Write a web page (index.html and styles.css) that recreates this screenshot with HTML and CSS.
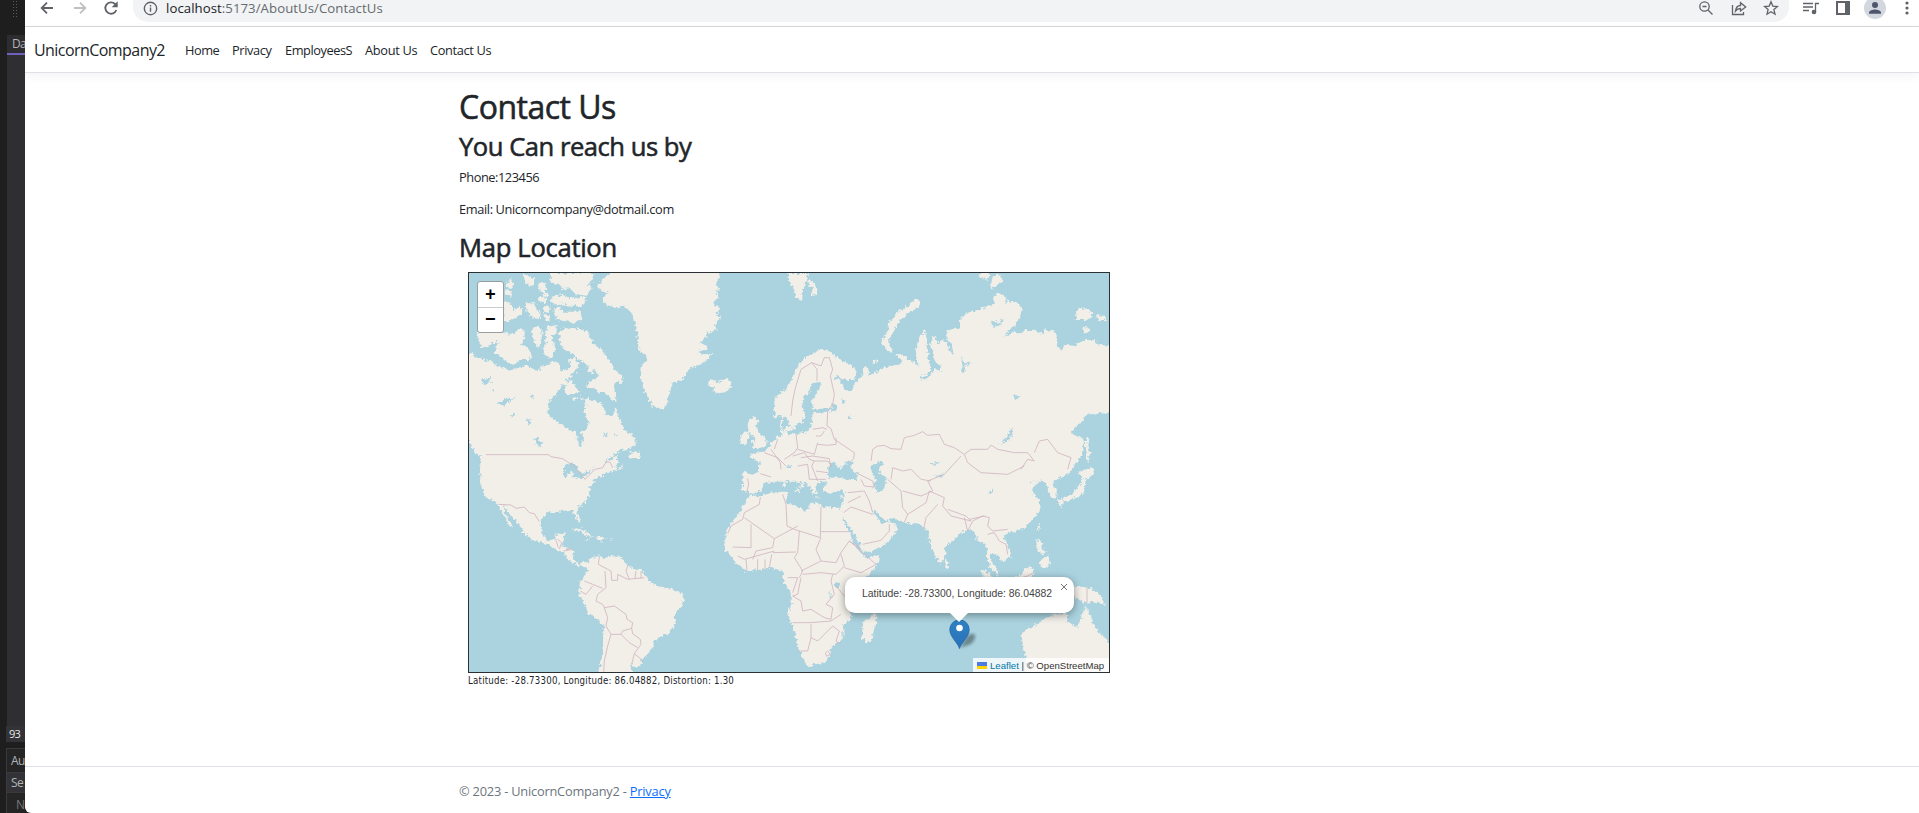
FILE: index.html
```html
<!DOCTYPE html>
<html lang="en">
<head>
<meta charset="utf-8">
<title>Contact Us - UnicornCompany2</title>
<link rel="stylesheet" href="styles.css">
</head>
<body>
<div class="desktop">
  <aside class="ide">
    <div class="ide-top"><span class="grip"></span></div>
    <div class="ide-tab">Da</div>
    <div class="ide-editor"></div>
    <div class="ide-zoom">93 </div>
    <div class="ide-gap"></div>
    <div class="ide-row">Au</div>
    <div class="ide-row ide-search">Se</div>
    <div class="ide-row ide-name">N</div>
  </aside>
  <div class="browser">
    <div class="toolbar">
      <svg class="ic back" viewBox="0 0 24 24"><path d="M21 12H4M12 4l-8 8 8 8"/></svg>
      <svg class="ic fwd" viewBox="0 0 24 24"><path d="M3 12h17M12 4l8 8-8 8"/></svg>
      <svg class="ic reload" viewBox="0 0 24 24"><path d="M20 15a8.500 8.500 0 1 1-2-9l2.500 2.500"/><path class="solid" d="M22 2v9h-9z"/></svg>
      <div class="address">
        <svg class="info" viewBox="0 0 16 16"><circle cx="8" cy="8" r="6.600"/><path d="M8 7v4.500M8 4.300v1.600"/></svg>
        <span class="url"><b>localhost</b>:5173/AboutUs/ContactUs</span>
        <svg class="tool t1" viewBox="0 0 16 16"><circle cx="6.500" cy="6.500" r="4.700"/><path d="M10 10l4.500 4.500M4.500 6.500h4"/></svg>
        <svg class="tool t2" viewBox="0 0 16 16"><path d="M1.500 5v9.500h11V12M4.500 11c.5-4 2.500-5.500 5-5.500V2.700L14.700 7 9.500 11V8.500c-2 0-3.500.5-5 2.500z"/></svg>
        <svg class="tool t3" viewBox="0 0 16 16"><path d="M8 1.800l1.800 4.300 4.700.4-3.600 3.100 1.100 4.600L8 11.700l-4 2.500 1.100-4.600L1.500 6.500l4.700-.4z"/></svg>
      </div>
      <svg class="tool t4" viewBox="0 0 18 16"><path d="M1 3.500h10M1 7h10M1 10.500h6M13.500 12V3.500H17"/><circle class="solid" cx="12" cy="12" r="2.300"/></svg>
      <svg class="tool t5" viewBox="0 0 16 16"><path class="solid" d="M1 1h14v14H1zM3 3v10h7V3z" fill-rule="evenodd"/></svg>
      <svg class="avatar" viewBox="0 0 22 22"><circle cx="11" cy="11" r="11"/><path d="M5 16.700v-1.200c0-2 4-3 6-3s6 1 6 3v1.200z"/><circle class="head" cx="11" cy="8" r="3"/></svg>
      <svg class="dots" viewBox="0 0 4 16"><circle cx="2" cy="3" r="1.600"/><circle cx="2" cy="8" r="1.600"/><circle cx="2" cy="13" r="1.600"/></svg>
    </div>
    <nav class="navbar">
      <a class="brand">UnicornCompany2</a>
      <a class="n1">Home</a><a class="n2">Privacy</a><a class="n3">EmployeesS</a><a class="n4">About Us</a><a class="n5">Contact Us</a>
    </nav>
    <main class="content">
      <h1>Contact Us</h1>
      <h2 class="reach">You Can reach us by</h2>
      <p class="phone">Phone:123456</p>
      <p class="email">Email: Unicorncompany@dotmail.com</p>
      <h2 class="maploc">Map Location</h2>
      <div class="map">
        <svg class="world" viewBox="27 24 1920 1197" preserveAspectRatio="none">
          <defs>
            <filter id="coast" x="0" y="0" width="1" height="1">
              <feTurbulence type="fractalNoise" baseFrequency=".1" numOctaves="3" seed="4" result="n"/>
              <feDisplacementMap in="SourceGraphic" in2="n" scale="18" xChannelSelector="R" yChannelSelector="G"/>
            </filter>
          </defs>
          <g filter="url(#coast)">
          <rect class="sea" x="0" y="0" width="2000" height="1260"/>
          <g class="land">
            <!-- North America -->
            <path d="M10 262L38 265 50 275 70 282 78 290 95 287 105 300 125 304 150 318 175 308 200 302 215 310 238 318 242 302 262 300 280 288 292 292 300 305 304 318 318 310 325 320 330 300 327 280 345 278 353 300 345 322 330 335 318 345 325 362 305 358 300 375 288 388 270 405 262 440 268 455 290 470 315 485 340 498 348 505 350 522 355 540 366 545 372 520 362 500 380 492 386 470 370 440 378 430 375 403 390 402 405 408 420 413 435 430 437 450 455 455 467 430 475 455 490 490 510 505 527 520 527 540 505 552 480 555 455 575 430 592 452 585 470 572 475 590 463 605 475 610 497 598 480 612 450 622 430 627 415 637 400 650 388 665 388 687 380 705 360 723 350 735 358 755 361 772 352 767 342 745 335 735 310 737 290 742 270 740 248 755 242 780 245 810 265 825 285 823 292 805 316 802 312 820 305 840 315 847 335 850 341 857 338 877 344 890 357 898 372 890 384 898 378 908 350 900 338 895 325 883 310 862 285 852 270 840 235 830 205 815 188 802 185 790 165 765 145 745 130 718 135 745 148 768 160 790 150 782 135 760 122 735 112 715 95 705 80 700 68 675 60 655 62 615 60 575 45 560 27 530 10 520z"/>
            <path d="M501 552L510 562 540 560 542 580 530 578 510 582 503 576 515 562zM50 205L70 200 95 200 125 205 118 225 95 235 75 250 60 240zM105 250L120 235 108 220 125 203 150 210 180 192 195 200 192 225 180 240 200 245 215 270 205 285 180 285 160 297 140 290 125 275 105 265zM215 190L235 184 248 200 245 230 235 245 220 230zM262 185L290 180 290 205 275 215 285 250 275 280 255 275 250 250 260 225 252 210zM300 195L325 188 360 192 380 195 388 215 405 240 425 255 450 290 460 310 490 335 485 355 468 350 462 365 470 410 450 400 435 385 415 382 400 370 380 368 382 352 398 345 415 335 405 315 385 305 370 290 352 280 340 265 325 262 308 250 298 225zM325 345L340 350 345 365 360 380 345 385 320 388 312 375zM383 305L400 308 396 325 383 320zM130 115L150 112 160 135 185 125 187 145 165 160 140 170 130 165zM197 115L225 115 230 135 242 140 240 160 225 165 200 140zM250 120L268 122 270 135 260 145 250 138zM250 148L270 150 268 170 254 165zM278 130L300 128 310 140 340 140 362 138 365 165 335 172 290 165zM275 95L310 90 325 100 375 95 378 110 365 125 310 120 285 118 270 108zM135 55L155 45 160 62 148 75zM135 75L158 80 155 95 138 92zM190 24L205 35 225 40 225 60 205 62 195 48zM232 60L245 48 262 70 255 85 240 80zM235 95L262 98 255 112 235 108zM270 24L400 24 400 45 385 55 395 70 380 92 345 88 330 70 310 72 300 60 280 55 270 40zM338 395L350 398 345 408 338 405zM362 388L368 398 364 410zM245 82L268 84 266 96 250 94z"/>
            <!-- Greenland, Iceland -->
            <path d="M468 10L430 40 412 60 425 80 450 82 430 95 425 105 440 120 470 128 490 122 512 140 522 165 532 205 535 240 540 260 555 262 562 285 545 300 543 340 550 370 565 400 580 425 598 430 612 437 620 420 628 385 638 355 665 345 690 310 720 300 745 280 760 265 735 268 712 262 745 250 722 232 735 225 740 205 770 195 765 180 785 155 768 150 778 130 762 115 775 100 768 80 783 75 765 55 780 40 775 10z"/>
            <path d="M743 352L755 342 765 352 785 348 800 340 815 352 812 368 795 380 780 388 758 378 768 365 748 362z"/>
            <!-- South America, Caribbean -->
            <path transform="translate(0 615)" d="M378 285L395 265 415 256 422 255 428 267 450 257 480 262 495 270 500 285 520 297 545 300 560 320 575 340 605 350 640 358 668 372 672 390 660 415 645 430 645 450 638 475 625 492 600 500 580 515 578 535 565 550 545 575 540 590 520 590 510 585 515 600 525 620H408L425 570 430 500 430 465 425 460 400 440 385 430 375 405 357 375 353 365 360 355 358 335 375 320 382 300zM333 180L350 175 370 180 395 195 402 200 380 198 360 183zM405 203L425 200 440 207 422 212zM376 209L388 210 380 213zM448 208L460 209 450 212z"/>
            <!-- Northern Eurasia -->
            <path transform="translate(960 0)" d="M-17 405L0 385 20 370 35 345 45 320 60 295 80 275 105 262 125 252 155 262 165 275 185 288 215 300 230 320 225 340 205 345 185 342 170 330 165 340 185 352 195 375 215 378 225 355 240 340 250 330 248 308 262 305 268 320 260 335 280 325 310 308 350 300 365 298 362 285 345 270 352 264 380 278 400 290 415 305 418 300 405 270 412 240 420 210 442 208 440 250 450 290 460 280 450 240 460 210 475 235 490 225 505 240 520 270 515 235 500 225 500 195 540 190 540 165 560 145 590 135 620 125 645 115 640 100 655 82 680 95 675 110 710 112 725 130 720 160 700 185 670 215 700 200 725 205 735 195 760 195 790 208 795 193 825 200 832 215 830 235 845 258 855 240 885 242 910 225 940 225 960 238 1000 250V440L950 445 920 450 895 480 875 500 890 515 905 512 912 530 905 570 885 600 865 625 820 650H-70L-60 590-80 582-92 572-85 565-50 560-30 542-10 515 5 510 0 480 5 450-17 462z"/>
            <path transform="translate(960 0)" d="M25 24H85L80 45 65 85 63 112 50 100 40 70 28 50zM90 45L105 55 115 80 105 93 92 85 98 70 82 50zM303 240L310 215 325 195 328 170 345 155 350 145 385 122 405 103 420 108 418 122 400 135 375 150 355 175 345 195 330 215 325 235 338 258 330 263 315 250zM430 198L438 202 433 208 426 205zM278 288L288 284 291 293 282 297zM595 24H630L625 45 605 38zM638 35L655 24 668 48 648 65 630 72zM888 135L905 128 935 140 938 155 920 165 890 165zM948 150L975 153 978 165 955 165zM905 185L925 188 928 198 915 205zM918 515L925 520 922 545 930 565 925 595 918 580zM912 615L940 610 945 625 925 640 905 640z"/>
            <!-- Southern Europe and Asia -->
            <path transform="translate(660 405)" d="M240 180V215L225 222 195 215 187 225 190 250 187 272 205 275 212 283 240 275 248 255 270 235 268 225 300 210 316 205 332 228 352 240 364 250 360 268 368 262 374 244 384 246 365 232 347 213 335 195 345 192 355 208 380 232 388 258 400 282 410 276 403 262 415 248 432 242 430 252 445 240 440 255 428 262 432 275 455 280 478 272 496 280 490 300 485 322 478 338 490 350 505 375 522 402 540 430 545 455 570 455 605 440 630 420 655 385 640 370 625 362 610 372 593 358 580 332 590 335 600 350 620 360 640 355 670 368 690 370 715 370 735 385 746 400 750 425 765 465 780 492 795 475 797 440 830 410 845 395 870 390 885 395 892 425 900 430 912 428 922 445 920 470 930 500 955 530 955 510 935 488 932 465 945 460 960 475 970 487 990 470 992 450 980 430 970 415 980 400 1000 395 1025 388 1050 370 1070 345 1082 320 1075 300 1060 280 1055 265 1075 250 1065 243 1050 250 1048 240 1075 238 1095 245 1105 270 1115 295 1130 290 1130 270 1118 250 1150 225 1170 205 1185 180z"/>
            <!-- Africa, Madagascar -->
            <path transform="translate(960 615)" d="M-90 75L-60 78-25 68 5 65 20 65 25 80 18 95 35 105 55 110 75 122 90 115 85 102 110 99 130 108 160 112 175 110 185 132 195 165 210 190 217 210 230 235 248 255 262 265 297 255 295 275 270 310 240 340 215 375 205 410 215 440 205 455 190 462 190 500 180 515 155 530 150 560 130 580 105 583 85 588 75 580 65 555 50 520 45 490 30 455 25 430 35 400 35 370 20 350 8 325 15 310 5 305-25 291-65 300-100 303-120 290-135 275-150 255-165 240-163 190-145 160-125 135-115 115-100 90zM285 425L292 445 285 470 272 515 255 518 245 500 250 455 270 445z"/>
            <!-- Islands of Europe and southern Asia, Australia -->
            <path transform="translate(660 405)" d="M210 55L225 52 235 65 228 78 240 100 260 122 258 140 235 145 218 150 225 138 215 125 225 115 208 100 203 75zM190 98L205 95 208 112 200 130 180 135 182 110zM340 268L360 265 355 277zM308 245L316 248 315 262 307 260zM309 225L314 228 312 240zM398 293L425 292 420 297zM478 290L488 288 484 295zM796 478L806 490 802 506 793 500z"/>
            <path transform="translate(960 615)" d="M600 300L625 308 665 345 670 380 640 360zM700 330L745 290 762 300 750 340zM775 165L780 162 778 180 770 178zM770 210L783 208 785 235 800 245 790 255 770 238zM780 270L805 255 810 285 795 295 780 285zM835 85L850 90 845 110 835 105zM850 85L875 75 890 60 905 40 910 20 918 25 912 65 900 80 875 88 855 95zM895 5L925-5 945 0 920 15 905 20zM870 345L900 350 920 350 950 365 978 405 945 395 915 400 890 385 875 370zM725 490L750 475 775 460 800 442 830 432 862 430 860 455 890 470 905 445 915 408 925 425 935 450 950 480 975 505 1000 535V620H735L740 570 728 530z"/>
          </g>
          <g class="water">
            <!-- Baltic, Ob gulf, lakes -->
            <path transform="translate(960 0)" d="M98 355L120 350 122 362 105 390 95 410 100 435 145 428 170 435 130 442 98 445 95 480 80 500 50 505 25 508 20 495 35 500 50 480 68 470 75 445 65 425 72 400 90 375zM10 455L25 462 32 490 20 480 10 500 5 480zM158 412L172 425 168 437 155 428zM183 398L195 408 190 422zM445 240L460 265 465 292 480 300 483 318 465 312 455 330 435 343 420 340 425 332 442 330 455 312 445 285zM500 220L515 240 518 275 508 250zM695 490L698 505 680 530 660 540 672 525zM630 165L655 175 670 160 660 182 640 185zM203 452L216 458 208 463zM545 275L552 295 580 292 552 302 558 320 544 325zM698 388L718 395 706 405z"/>
            <path d="M312 605L320 595 345 597 355 612 372 640 342 637 335 615 320 640 312 635zM60 345L100 335 85 350 100 352 75 358zM115 415L130 402 165 400 140 415 125 425zM220 520L235 515 248 550 235 545zM150 450L170 445 160 455zM390 615L405 610 375 632 345 640 360 628zM210 390L222 388 218 405zM200 465L212 462 206 482zM95 375L108 372 102 380zM430 508L445 505 436 515zM462 508L476 512 465 516z"/>
            <!-- Black Sea, Caspian, Aral, Persian Gulf, African lakes -->
            <path transform="translate(660 405)" d="M447 195L465 188 478 205 500 195 495 185 520 182 512 205 535 225 528 240 500 240 480 230 450 235 440 225zM575 195L605 182 612 192 595 205 605 225 620 235 612 270 595 278 580 262 590 240 575 220 570 205zM750 190L785 185 760 198zM760 228L795 222 775 232zM928 273L938 273 937 280 928 279zM465 548L480 545 478 560 465 562zM448 570L455 590 450 600zM318 200L336 195 332 205z"/>
          </g>
          </g>
          <g class="borders" transform="translate(3 3)">
            <path d="M75 566H262L270 572 305 578 335 598 350 612 372 640 402 610 425 605 437 585 448 590 455 605M290 820L302 830 295 850M315 850L330 848"/>
            <path transform="translate(0 615)" d="M112 100L150 102 165 112 190 108 205 125 220 128 235 152M415 258L412 280 440 295 450 300 452 328 470 328 470 310 500 325 550 320M500 285L495 300 505 325M525 300L522 322M540 300V322M432 300L435 350 410 370 405 390 425 400 430 410 460 405 495 430 498 445 515 455 512 472M370 330L395 340 425 352M358 360L375 370 395 345M430 410L440 440 435 465 450 490 480 490 485 480 512 472 515 488 538 505 540 520 520 548 545 568M450 490L440 525 430 570 428 605M480 490L505 515 530 530M520 548L512 580M285 208L292 230M307 240L335 235"/>
            <path transform="translate(960 0)" d="M30 450L35 405 42 370 60 310 92 290 108 310V345M92 290L120 300 130 275 145 275M145 275L155 310 148 330 160 385 155 415 140 435 138 480 150 488 160 520 190 540 220 560 218 578 205 590M95 490L125 485 138 490M105 510L120 510 130 495M110 535L140 538 165 535 165 515M45 505L50 545 40 560 10 580M50 550L100 565 110 530M60 575L95 570 145 578M-50 560L-10 575 15 600M-20 550L-10 520M145 578L150 605M270 585L275 550 290 540 310 538 330 548 360 550 370 515 400 508 425 497 440 508 475 505 490 535 520 545 550 565 570 550 620 550 630 537 650 550 700 560 740 560 760 585 740 580 720 610M550 565L560 590 600 620 680 625 730 600M760 560L775 525 800 520 830 560 870 575 860 610"/>
            <path transform="translate(660 405)" d="M200 232L203 250 198 272M238 218L270 228M300 205L298 185 270 145M335 165L370 155 385 175 400 180 392 195 410 240M350 195L380 190 385 235M400 180L440 180 452 195M405 210L440 215M385 235L435 235M525 215L575 240 580 258 550 255 540 235M500 275L550 270 565 300 575 335M500 305L540 285M488 335L510 318 575 340M630 235L635 200 665 210 690 205 720 235 750 240M620 235L660 270 665 320 680 340 735 305 745 270 790 290 785 315 810 345 870 360 855 345 800 325M665 270L720 285 755 270 740 240 790 220 840 165M670 365L680 340M728 385L735 350 770 310M850 350L860 390 875 360 905 345 925 350 920 375 935 390 980 385M865 355L910 345M920 400L940 395 955 420 975 430 980 460M545 430L600 418 625 390 625 370"/>
            <path transform="translate(960 615)" d="M-62 78L-65 100-110 125-115 145-150 165-160 188M-110 140L-20 203 50 165M-90 160V230L-145 228M5 70L15 100 18 165 40 175 118 200 120 108M120 182H205M-20 203L-25 230-75 240-85 265M55 180L50 245 40 260 65 300 55 320M-25 245L45 243M120 200L105 235 120 270 60 300M120 270L165 275 180 245 205 210 235 230M180 250L190 285 165 310 120 305 65 310M205 210L240 240 285 280 240 305 190 290M-105 265L-102 298M-70 265V298M-48 265V298M-28 250L-35 290M-130 255L-110 265-20 240M20 320H50L35 365M60 320L50 370 35 375 60 390 65 420 90 415 130 440 150 445 155 410 135 400 160 370 150 330 155 310M35 455L90 455 150 450 180 430M90 460V500L80 540 50 540M90 500L110 510 155 465 175 480 165 510 180 520M140 540L148 550 137 556 133 546zM165 345L190 375 215 375"/>
            <path transform="translate(960 615)" d="M705 325L740 315 758 305M918 350V395"/>
          </g>
        </svg>
        <div class="zoomctl"><span>+</span><span>−</span></div>
        <svg class="pin" viewBox="0 0 38 30"><defs><linearGradient id="pinfill" x2="0" y2="1"><stop stop-color="#2e82c4"/><stop offset="1" stop-color="#2a70b8"/></linearGradient><filter id="soft"><feGaussianBlur stdDeviation="1.600"/></filter></defs><path class="shade" filter="url(#soft)" d="M11 28L18 16Q24 12 26 15 27 19 22 24z"/><path class="body" d="M10.500 28.500C9 23 .8 17 .8 9.500a9.700 9.700 0 0 1 19.400 0C20.200 17 12 23 10.500 28.500z"/><circle cx="10.500" cy="8" r="3.300"/></svg>
        <div class="popup"><span>Latitude: -28.73300, Longitude: 86.04882</span><svg class="close" viewBox="0 0 8 8"><path d="M1 1l6 6M7 1L1 7"/></svg></div>
        <div class="attribution"><i class="flag"></i><a>Leaflet</a> | © OpenStreetMap</div>
      </div>
      <div class="status">Latitude: -28.73300, Longitude: 86.04882, Distortion: 1.30</div>
    </main>
    <footer class="footer"><span class="copy">© 2023 - UnicornCompany2 - <a>Privacy</a></span></footer>
  </div>
</div>
</body>
</html>
```

FILE: styles.css
```css
* { box-sizing: border-box; }
body { margin: 0; font-family: "Segoe UI", "Open Sans", "Noto Sans", sans-serif; color: #212529; font-size: 12.8px; }
.desktop { display: flex; width: 1919px; height: 813px; overflow: hidden; background: #1e1e1e; }

.ide { display: flex; flex-direction: column; flex: none; width: 25px; padding-left: 6px; overflow: hidden; white-space: nowrap; color: #b4b4b4; font-size: 12px; letter-spacing: -0.7px; }
.ide > div { flex: none; }
.ide-top { height: 35px; padding-left: 6px; }
.grip { display: block; width: 6px; height: 18px; background: radial-gradient(circle, #5a5a5c 0.7px, transparent 1px) 0 0 / 3px 3px; }
.ide-tab { height: 20px; margin-left: 1px; padding-left: 5px; line-height: 18px; background: #2d2d30; border-bottom: 2px solid #6f60c0; }
.ide-editor { height: 671px; margin-left: 1px; background: #2f2f31; }
.ide-zoom { height: 16px; padding-left: 3px; line-height: 16px; background: #333337; color: #e8e8e8; font-size: 11px; }
.ide-gap { height: 6px; }
.ide-row { height: 24px; padding-left: 4px; line-height: 23px; background: #252526; border: 1px solid #3a3a3d; border-width: 1px 0 0 1px; }
.ide .ide-search { height: 20px; line-height: 20px; background: #333337; }
.ide .ide-name { height: 21px; padding-left: 9px; line-height: 24px; color: #777; }

.browser { display: flex; flex-direction: column; flex: none; width: 1894px; height: 813px; background: #fff; border-bottom-left-radius: 6px; overflow: hidden; }
svg { display: block; flex: none; fill: none; stroke: #5f6368; stroke-width: 1.5; }
.solid { fill: #5f6368; stroke: none; }
.toolbar { display: flex; flex: none; height: 27px; border-bottom: 1px solid #d8d8d8; }
.ic { width: 16px; height: 16px; stroke-width: 2.7; }
.back { margin-left: 14px; }
.fwd { margin-left: 17px; stroke: #bdbfc2; }
.reload { margin: 0 14px 0 15px; }
.address { display: flex; width: 1656px; height: 22px; padding-left: 10px; background: #f1f3f4; border-radius: 0 0 15px 15px; }
.info { width: 15px; height: 15px; margin-top: 1px; }
.url { flex: 1; margin-left: 8px; margin-top: -1px; line-height: 18px; font-size: 13.2px; letter-spacing: 0.06px; color: #666a6e; }
.url b { font-weight: 400; color: #202124; }
.tool { width: 16px; height: 16px; stroke-width: 1.3; }
.t1 { margin-right: 17px; }
.t2 { margin-right: 16px; }
.t3 { margin-right: 10px; }
.t4 { width: 18px; margin-left: 13px; }
.t5 { margin-left: 15px; }
.avatar { width: 22px; height: 22px; margin: -3px 0 0 13px; fill: #d3d7df; stroke: none; }
.avatar path, .head { fill: #4d566a; }
.dots { width: 4px; height: 16px; margin-left: 19px; fill: #5f6368; stroke: none; }

.navbar { display: flex; align-items: center; flex: none; height: 46px; padding-left: 10px; border-bottom: 1px solid #dee2e6; box-shadow: 0 3px 10px rgba(0,0,0,.05); white-space: nowrap; }
.navbar a { padding-top: 1px; }
.navbar .brand { width: 150px; margin-left: -1px; margin-right: 1px; padding-top: 0; font-size: 16px; letter-spacing: -0.56px; }
.n1 { width: 47px; letter-spacing: -0.5px; }
.n2 { width: 53px; letter-spacing: -0.4px; }
.n3 { width: 80px; letter-spacing: -0.45px; }
.n4 { width: 65px; letter-spacing: -0.3px; }
.n5 { letter-spacing: -0.35px; }

.content { flex: 1; margin-left: 434px; padding-top: 13px; }
h1, h2, p { margin: 0; white-space: nowrap; }
h1, h2 { -webkit-text-stroke: .55px #212529; }
h1 { height: 45px; line-height: 41px; font-size: 32px; font-weight: 500; letter-spacing: -0.5px; }
h2 { font-size: 25.600px; font-weight: 500; line-height: 31px; }
.reach { height: 37px; letter-spacing: -0.48px; }
.phone { height: 32px; line-height: 19px; letter-spacing: -0.45px; }
.email { height: 32px; line-height: 19px; letter-spacing: -0.38px; }
.maploc { height: 40px; letter-spacing: -0.3px; }
.map { position: relative; width: 642px; height: 401px; margin-left: 9px; border: 1px solid #2b3035; overflow: hidden; font-family: "Liberation Sans", Arial, sans-serif; }
.world { width: 640px; height: 399px; stroke: none; }
.sea, .water { fill: #aad3df; }
.land { fill: #f2efe9; }
.borders { fill: none; stroke: #d0b5c1; stroke-width: 2.500; }
.zoomctl { position: absolute; left: 8px; top: 8px; width: 27px; height: 52px; border: 1px solid #999fa0; border-radius: 3px; background: #fff; overflow: hidden; font: bold 18px/26px "Liberation Mono", monospace; color: #000; text-align: center; }
.zoomctl span { display: block; height: 25px; }
.zoomctl span + span { border-top: 1px solid #ccc; line-height: 24px; }
.pin { position: absolute; left: 480px; top: 347px; width: 38px; height: 30px; stroke: none; }
.pin .body { fill: url(#pinfill); stroke: #2468a5; stroke-width: .8; }
.pin .shade { fill: #38484d; opacity: .55; }
.pin circle { fill: #fff; }
.popup { position: absolute; left: 376px; top: 304px; width: 229px; height: 36px; border-radius: 10px; background: #fff; box-shadow: 0 2px 9px rgba(0,0,0,.4); }
.popup::after { content: ""; position: absolute; left: 104px; top: 35px; border: 10px solid transparent; border-top-color: #fff; border-bottom: 0; }
.popup span { display: block; padding-left: 17px; line-height: 34px; font-size: 10.400px; color: #444; white-space: nowrap; }
.close { position: absolute; right: 6px; top: 6px; width: 8px; height: 8px; stroke: #757575; stroke-width: 1; }
.attribution { position: absolute; right: 0; bottom: 0; display: flex; align-items: center; width: 136px; height: 14px; padding-left: 4px; background: rgba(255,255,255,.8); font-size: 9.600px; white-space: pre; color: #333; }
.attribution a { color: #0078a8; }
.flag { width: 10px; height: 7px; margin-right: 3px; background: linear-gradient(#4c7be1 57%, #ffd500 57%); }
.status { margin-left: 9px; font: 9.600px/15px "DejaVu Sans Condensed", "DejaVu Sans", sans-serif; font-stretch: condensed; letter-spacing: .22px; white-space: nowrap; }
.footer { flex: none; height: 47px; padding-left: 434px; border-top: 1px solid #dee2e6; line-height: 49px; color: #6c757d; letter-spacing: -0.2px; }
.footer a { color: #0d6efd; text-decoration: underline; }
```
